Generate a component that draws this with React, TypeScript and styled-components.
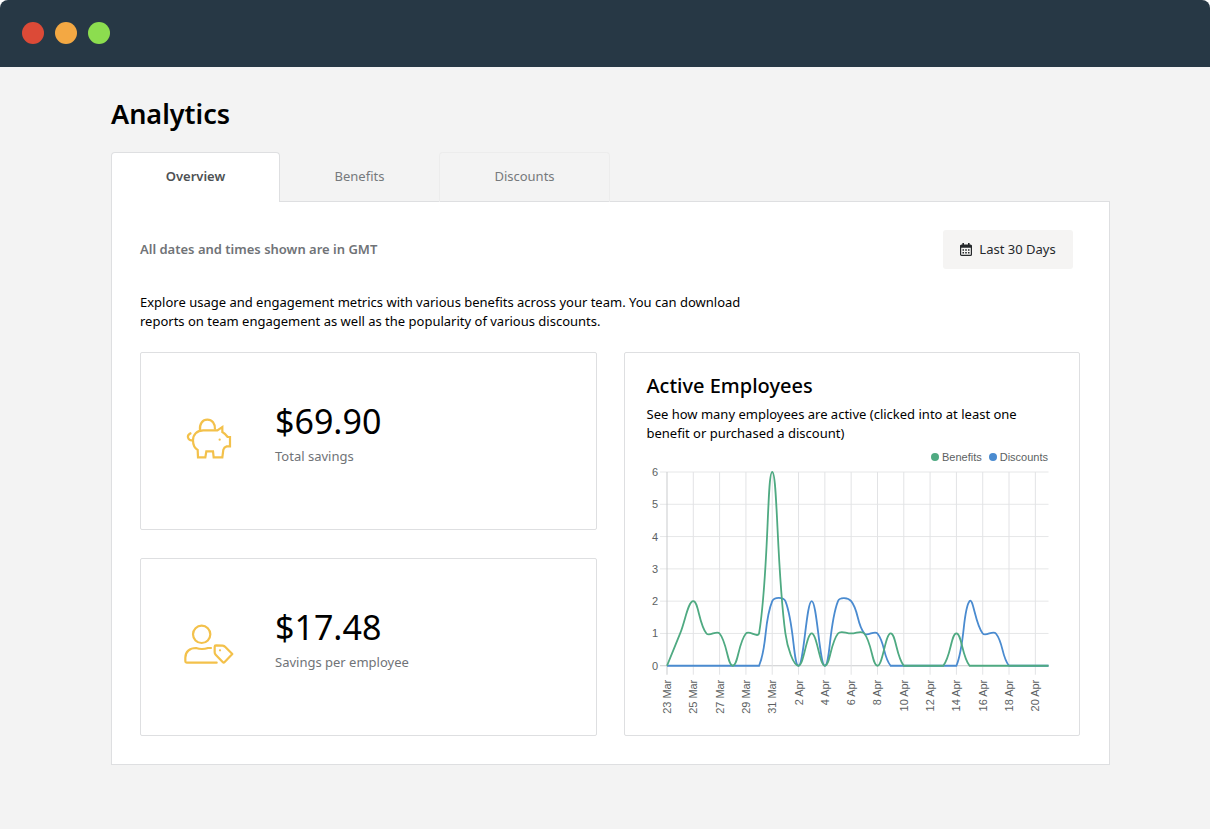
import React from 'react';
import styled, { createGlobalStyle } from 'styled-components';

const GlobalStyle = createGlobalStyle`
  *, *::before, *::after { box-sizing: border-box; }
  body {
    margin: 0;
    background: #f3f3f3;
    color: #000;
    font-family: 'Noto Sans', 'Open Sans', sans-serif;
    font-size: 13px;
    line-height: 19px;
  }
  h1, h2, p, dl, dd, dt { margin: 0; }
  button { font: inherit; cursor: pointer; }
`;

const Corners = styled.div`
  background: #fff;
`;

const TitleBar = styled.header`
  display: flex;
  align-items: center;
  gap: 11px;
  height: 67px;
  padding: 0 22px 2px;
  background: #273845;
  border-radius: 8px 8px 0 0;
`;

const Light = styled.span<{ $color: string }>`
  width: 22px;
  height: 22px;
  border-radius: 50%;
  background: ${(p) => p.$color};
`;

const Page = styled.main`
  padding: 29px 100px 64px 111px;
`;

const Title = styled.h1`
  font-size: 27px;
  font-weight: 600;
  line-height: 35px;
`;

const Tabs = styled.div`
  display: flex;
  margin-top: 21px;
`;

const Tab = styled.button<{ $width: number; $outlined?: boolean }>`
  width: ${(p) => p.$width}px;
  height: 50px;
  padding: 0 0 2px;
  border: 1px solid ${(p) => (p.$outlined ? '#ececec' : 'transparent')};
  border-bottom: 0;
  border-radius: 4px 4px 0 0;
  background: transparent;
  color: #76797c;

  &[aria-selected='true'] {
    position: relative;
    border-color: #dedfe1;
    background: #fff;
    color: #4e5154;
    font-weight: 600;
  }
`;

const Panel = styled.section`
  margin-top: -1px;
  padding: 28px 29px 28px 28px;
  border: 1px solid #dedfe1;
  background: #fff;
`;

const PanelHead = styled.div`
  display: flex;
  align-items: center;
  justify-content: space-between;
  padding-right: 7px;
`;

const Note = styled.p`
  color: #707377;
  font-weight: 600;
`;

const RangeButton = styled.button`
  display: flex;
  align-items: center;
  justify-content: center;
  gap: 7px;
  width: 130px;
  height: 39px;
  padding: 0;
  border: 0;
  border-radius: 3px;
  background: #f5f4f3;
  color: #25282b;
`;

const Intro = styled.p`
  max-width: 640px;
  margin-top: 24px;
`;

const Cards = styled.div`
  display: grid;
  grid-template-columns: 1fr 1fr;
  gap: 27px;
  margin-top: 21px;
`;

const StatColumn = styled.div`
  display: grid;
  grid-template-rows: 1fr 1fr;
  gap: 28px;
`;

const Card = styled.section`
  border: 1px solid #dedfe1;
  border-radius: 2px;
  background: #fff;
`;

const StatCard = styled(Card)`
  display: flex;
  align-items: center;
  min-height: 178px;
  padding: 0 42px 18px;
`;

const IconSlot = styled.div`
  display: flex;
  justify-content: center;
  width: 51px;
  margin-right: 41px;
  padding-top: 12px;
`;

const Stat = styled.dl`
  display: flex;
  flex-direction: column;
`;

const StatValue = styled.dd`
  order: -1;
  font-size: 34px;
  line-height: 44px;
`;

const StatLabel = styled.dt`
  margin-top: 4px;
  color: #707377;
`;

const ChartCard = styled(Card)`
  padding: 20px 21px 0 22px;
`;

const CardTitle = styled.h2`
  font-size: 20px;
  font-weight: 500;
  line-height: 26px;
`;

const CardText = styled.p`
  margin-top: 6px;
`;

const Legend = styled.div`
  display: flex;
  justify-content: flex-end;
  gap: 7px;
  margin-top: 6px;
  padding-right: 10px;
  color: #5c5f62;
  font: 11px/16px 'Liberation Sans', Arial, sans-serif;
`;

const LegendItem = styled.span<{ $color: string }>`
  display: flex;
  align-items: center;
  gap: 3px;

  &::before {
    content: '';
    width: 8px;
    height: 8px;
    border-radius: 50%;
    background: ${(p) => p.$color};
  }
`;

const ChartSvg = styled.svg`
  display: block;
  width: 100%;
  height: auto;

  text {
    fill: #5c5f62;
    font: 11px 'Liberation Sans', Arial, sans-serif;
    text-anchor: end;
  }
`;

const GREEN = '#4faa82';
const BLUE = '#4a8bd0';

const benefits = [
  0, 1, 2, 1, 1, 0, 1, 1, 6, 1, 0, 1, 0, 1, 1, 1, 0, 1, 0, 0, 0, 0, 1, 0, 0, 0, 0, 0, 0, 0,
];
const discounts = [
  0, 0, 0, 0, 0, 0, 0, 0, 2, 2, 0, 2, 0, 2, 2, 1, 1, 0, 0, 0, 0, 0, 0, 2, 1, 1, 0, 0, 0, 0,
];
const days = [
  '23 Mar', '25 Mar', '27 Mar', '29 Mar', '31 Mar', '2 Apr', '4 Apr', '6 Apr',
  '8 Apr', '10 Apr', '12 Apr', '14 Apr', '16 Apr', '18 Apr', '20 Apr',
];

const LEFT = 20;
const RIGHT = 402;
const TOP = 7;
const BOTTOM = 201;
const xAt = (i: number) => LEFT + ((RIGHT - LEFT) * i) / 29;
const yAt = (v: number) => BOTTOM - ((BOTTOM - TOP) * v) / 6;
const clampY = (y: number) => Math.min(BOTTOM, Math.max(TOP, y));

// Smooth line through the points, with handles kept inside the plot area.
function linePath(values: number[]): string {
  const pts = values.map((v, i) => ({ x: xAt(i), y: yAt(v) }));
  const handles = pts.map((p, i) => {
    const a = pts[Math.max(0, i - 1)];
    const b = pts[Math.min(pts.length - 1, i + 1)];
    const before = Math.hypot(p.x - a.x, p.y - a.y);
    const after = Math.hypot(b.x - p.x, b.y - p.y);
    const total = before + after;
    const fa = (0.4 * before) / total;
    const fb = (0.4 * after) / total;
    return {
      inX: p.x - fa * (b.x - a.x),
      inY: clampY(p.y - fa * (b.y - a.y)),
      outX: p.x + fb * (b.x - a.x),
      outY: clampY(p.y + fb * (b.y - a.y)),
    };
  });
  return pts
    .map((p, i) =>
      i === 0
        ? `M${p.x} ${p.y}`
        : `C${handles[i - 1].outX} ${handles[i - 1].outY} ${handles[i].inX} ${handles[i].inY} ${p.x} ${p.y}`,
    )
    .join('');
}

function ActivityChart() {
  return (
    <ChartSvg viewBox="0 0 412 258" role="img" aria-label="Active employees per day">
      {[0, 1, 2, 3, 4, 5, 6].map((v) => (
        <g key={v}>
          <line
            x1={LEFT - 7}
            x2={RIGHT}
            y1={yAt(v)}
            y2={yAt(v)}
            stroke={v === 0 ? '#c9cbcd' : '#e6e7e8'}
          />
          <text x={11} y={yAt(v) + 4}>{v}</text>
        </g>
      ))}
      {days.map((day, i) => (
        <g key={day}>
          <line
            x1={xAt(i * 2)}
            x2={xAt(i * 2)}
            y1={TOP}
            y2={BOTTOM + 9}
            stroke={i === 0 ? '#c9cbcd' : '#e2e3e5'}
          />
          <text transform={`translate(${xAt(i * 2) + 4} ${BOTTOM + 14}) rotate(-90)`}>{day}</text>
        </g>
      ))}
      <path d={linePath(discounts)} fill="none" stroke={BLUE} strokeWidth="1.8" />
      <path d={linePath(benefits)} fill="none" stroke={GREEN} strokeWidth="1.8" />
    </ChartSvg>
  );
}

function CalendarIcon() {
  return (
    <svg width="12" height="13" viewBox="0 0 12 13" aria-hidden="true">
      <rect x="0.6" y="2.1" width="10.8" height="10.3" rx="1" fill="none" stroke="currentColor" strokeWidth="1.2" />
      <path d="M0.6 2H11.4V4.8H0.6ZM2.4 0H4V3H2.4ZM8 0H9.6V3H8Z" fill="currentColor" />
      <path
        d="M2.5 6.2H4V7.7H2.5ZM5.2 6.2H6.8V7.7H5.2ZM8 6.2H9.5V7.7H8ZM2.5 9H4V10.5H2.5ZM5.2 9H6.8V10.5H5.2ZM8 9H9.5V10.5H8Z"
        fill="currentColor"
      />
    </svg>
  );
}

function PiggyIcon() {
  return (
    <svg width="46" height="41" viewBox="48 54 138 123" fill="none" stroke="#f3c14b" strokeWidth="6.6" aria-hidden="true">
      <path d="M90 91C88 71 98 59 112 59C126 59 136 70 135 89" />
      <path d="M84 172H106L109 154H129L131 172H157L160 149Q162 141 170 139H180V111H173Q166 101 157 96V81L142 91H100C80 91 69 104 69 121C69 136 76 146 83 150Z" />
      <path d="M70 121C53 124 47 105 64 99" />
      <circle cx="149" cy="119" r="3.4" fill="#f3c14b" stroke="none" />
    </svg>
  );
}

function EmployeeIcon() {
  return (
    <svg width="50" height="41" viewBox="41 57 150 123" fill="none" stroke="#f3c14b" strokeWidth="6.6" strokeLinecap="round" strokeLinejoin="round" aria-hidden="true">
      <circle cx="94" cy="88" r="26" />
      <path d="M122 129H113Q95 135 77 129C58 129 45 140 45 158V169Q45 173 49 173H139" />
      <path d="M133 125Q133 121 137 121L157 122Q162 123 165 126L186 147L163 171Q160 174 157 171L136 149Q133 146 133 142Z" />
      <circle cx="149" cy="136" r="3.4" fill="#f3c14b" stroke="none" />
    </svg>
  );
}

export default function App() {
  return (
    <>
      <GlobalStyle />
      <Corners>
        <TitleBar>
          <Light $color="#dc4a37" />
          <Light $color="#f3a843" />
          <Light $color="#8cdd4f" />
        </TitleBar>
      </Corners>
      <Page>
        <Title>Analytics</Title>
        <Tabs role="tablist">
          <Tab id="tab-overview" role="tab" aria-selected="true" aria-controls="overview" $width={169}>Overview</Tab>
          <Tab role="tab" aria-selected="false" $width={159}>Benefits</Tab>
          <Tab role="tab" aria-selected="false" $width={171} $outlined>Discounts</Tab>
        </Tabs>
        <Panel id="overview" role="tabpanel" aria-labelledby="tab-overview">
          <PanelHead>
            <Note>All dates and times shown are in GMT</Note>
            <RangeButton>
              <CalendarIcon />
              Last 30 Days
            </RangeButton>
          </PanelHead>
          <Intro>
            Explore usage and engagement metrics with various benefits across your team. You can download
            reports on team engagement as well as the popularity of various discounts.
          </Intro>
          <Cards>
            <StatColumn>
              <StatCard>
                <IconSlot><PiggyIcon /></IconSlot>
                <Stat>
                  <StatLabel>Total savings</StatLabel>
                  <StatValue>$69.90</StatValue>
                </Stat>
              </StatCard>
              <StatCard>
                <IconSlot><EmployeeIcon /></IconSlot>
                <Stat>
                  <StatLabel>Savings per employee</StatLabel>
                  <StatValue>$17.48</StatValue>
                </Stat>
              </StatCard>
            </StatColumn>
            <ChartCard>
              <CardTitle>Active Employees</CardTitle>
              <CardText>
                See how many employees are active (clicked into at least one benefit or purchased a discount)
              </CardText>
              <Legend>
                <LegendItem $color={GREEN}>Benefits</LegendItem>
                <LegendItem $color={BLUE}>Discounts</LegendItem>
              </Legend>
              <ActivityChart />
            </ChartCard>
          </Cards>
        </Panel>
      </Page>
    </>
  );
}
